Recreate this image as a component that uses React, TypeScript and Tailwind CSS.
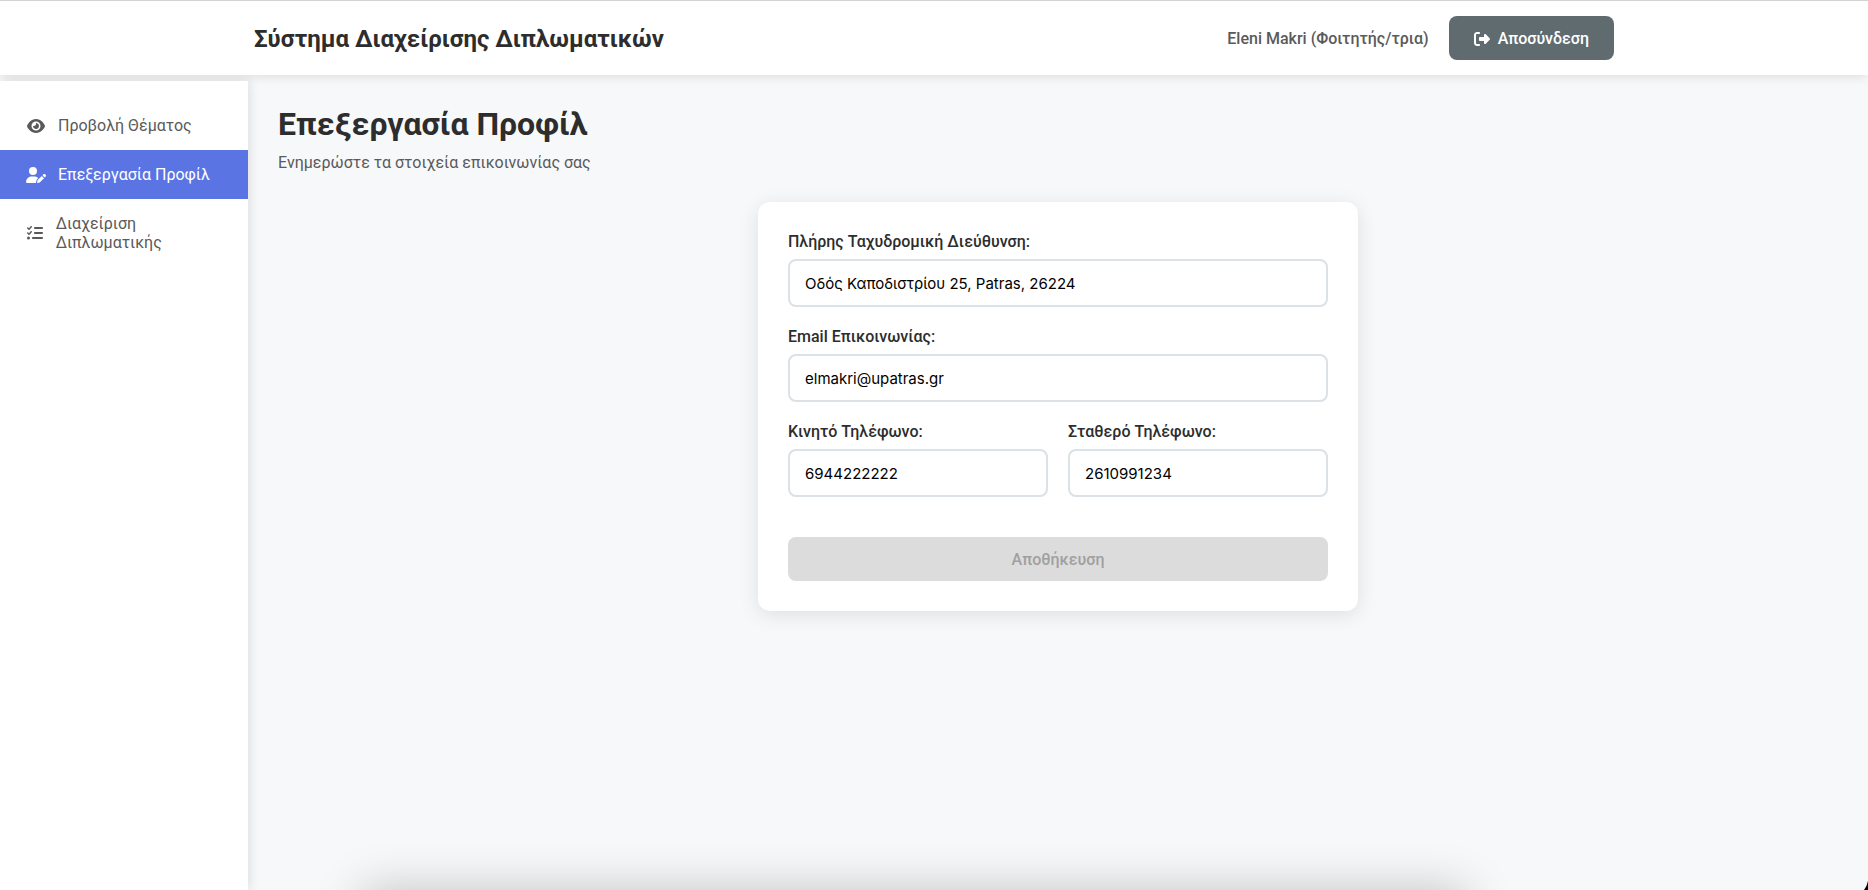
import { useState } from "react";
import type { ReactNode } from "react";
import { FaEye, FaListCheck, FaRightFromBracket, FaUserPen } from "react-icons/fa6";

function Header() {
  return (
    <header className="border-t border-[#d3d3d3] bg-white shadow-[0_2px_10px_rgba(0,0,0,0.1)]">
      <div className="mx-auto flex h-[74px] max-w-[1400px] items-center justify-between px-5">
        <div className="pt-px text-2xl font-bold text-[#2d2d2d]">Σύστημα Διαχείρισης Διπλωματικών</div>
        <div className="flex items-center gap-5">
          <span className="pt-px font-medium text-[#5a5a5a]">Eleni Makri (Φοιτητής/τρια)</span>
          <button
            type="button"
            className="flex h-11 items-center gap-2 rounded-lg bg-[#606b70] px-[25px] pt-px font-medium text-white"
          >
            <FaRightFromBracket className="size-4" aria-hidden />
            Αποσύνδεση
          </button>
        </div>
      </div>
    </header>
  );
}

function NavItem({ icon, label, active = false }: { icon: ReactNode; label: string; active?: boolean }) {
  return (
    <li>
      <a
        href="#"
        aria-current={active ? "page" : undefined}
        className={
          active
            ? "flex items-center gap-3 bg-[#5b74e3] py-[15px] pr-6 pl-[26px] leading-[19px] text-white"
            : "flex items-center gap-3 py-[15px] pr-6 pl-[26px] leading-[19px] text-[#5a5a5a]"
        }
      >
        <span className="flex w-5 justify-center">{icon}</span>
        <span>{label}</span>
      </a>
    </li>
  );
}

function Sidebar() {
  return (
    <nav className="relative mt-[6px] w-[248px] shrink-0 bg-white pt-5 shadow-[2px_0_10px_rgba(0,0,0,0.1)]">
      <ul>
        <NavItem icon={<FaEye className="h-4 w-[18px]" aria-hidden />} label="Προβολή Θέματος" />
        <NavItem icon={<FaUserPen className="h-4 w-5" aria-hidden />} label="Επεξεργασία Προφίλ" active />
        <NavItem icon={<FaListCheck className="size-4" aria-hidden />} label="Διαχείριση Διπλωματικής" />
      </ul>
    </nav>
  );
}

function Field({ id, label, type, initial }: { id: string; label: string; type: string; initial: string }) {
  const [value, setValue] = useState(initial);
  return (
    <div className="flex min-w-0 flex-col gap-2">
      <label htmlFor={id} className="leading-[19px] font-medium text-[#2d2d2d]">
        {label}
      </label>
      <input
        id={id}
        type={type}
        value={value}
        onChange={(e) => setValue(e.target.value)}
        className="h-12 w-full rounded-lg border-2 border-[#dce1e5] bg-white px-[15px] font-['Inter','Roboto',sans-serif] text-[15px] text-black outline-none focus:border-[#5b74e3]"
      />
    </div>
  );
}

function ProfileForm() {
  return (
    <form className="mx-auto mt-[30px] flex max-w-[600px] flex-col gap-5 rounded-xl bg-white p-[30px] shadow-[0_4px_20px_rgba(0,0,0,0.1)]">
      <Field id="address" label="Πλήρης Ταχυδρομική Διεύθυνση:" type="text" initial="Οδός Καποδιστρίου 25, Patras, 26224" />
      <Field id="email" label="Email Επικοινωνίας:" type="email" initial="elmakri@upatras.gr" />
      <div className="grid grid-cols-2 gap-5">
        <Field id="mobile" label="Κινητό Τηλέφωνο:" type="tel" initial="6944222222" />
        <Field id="landline" label="Σταθερό Τηλέφωνο:" type="tel" initial="2610991234" />
      </div>
      <button type="submit" disabled className="mt-5 h-11 rounded-lg bg-[#dcdcdc] pt-px font-medium text-[#a0a0a0]">
        Αποθήκευση
      </button>
    </form>
  );
}

export default function App() {
  return (
    <div className="flex min-h-screen flex-col bg-[#f7f8fa] font-['Roboto',sans-serif] text-base">
      <Header />
      <div className="flex grow">
        <Sidebar />
        <main className="min-w-0 grow p-[30px]">
          <h1 className="text-[32px] leading-[38px] font-bold text-[#2d2d2d]">Επεξεργασία Προφίλ</h1>
          <p className="mt-[10px] leading-[19px] text-[#5a5a5a]">Ενημερώστε τα στοιχεία επικοινωνίας σας</p>
          <ProfileForm />
        </main>
      </div>
      <div className="pointer-events-none fixed top-full right-[402px] left-[362px] h-20 shadow-[0_0_48px_rgba(0,0,0,0.22)]" />
      <svg className="pointer-events-none fixed right-0 bottom-0" width="4" height="9" viewBox="0 0 4 9" aria-hidden>
        <path d="M4 0Q3 5 0 9H4Z" fill="#000" />
      </svg>
    </div>
  );
}
